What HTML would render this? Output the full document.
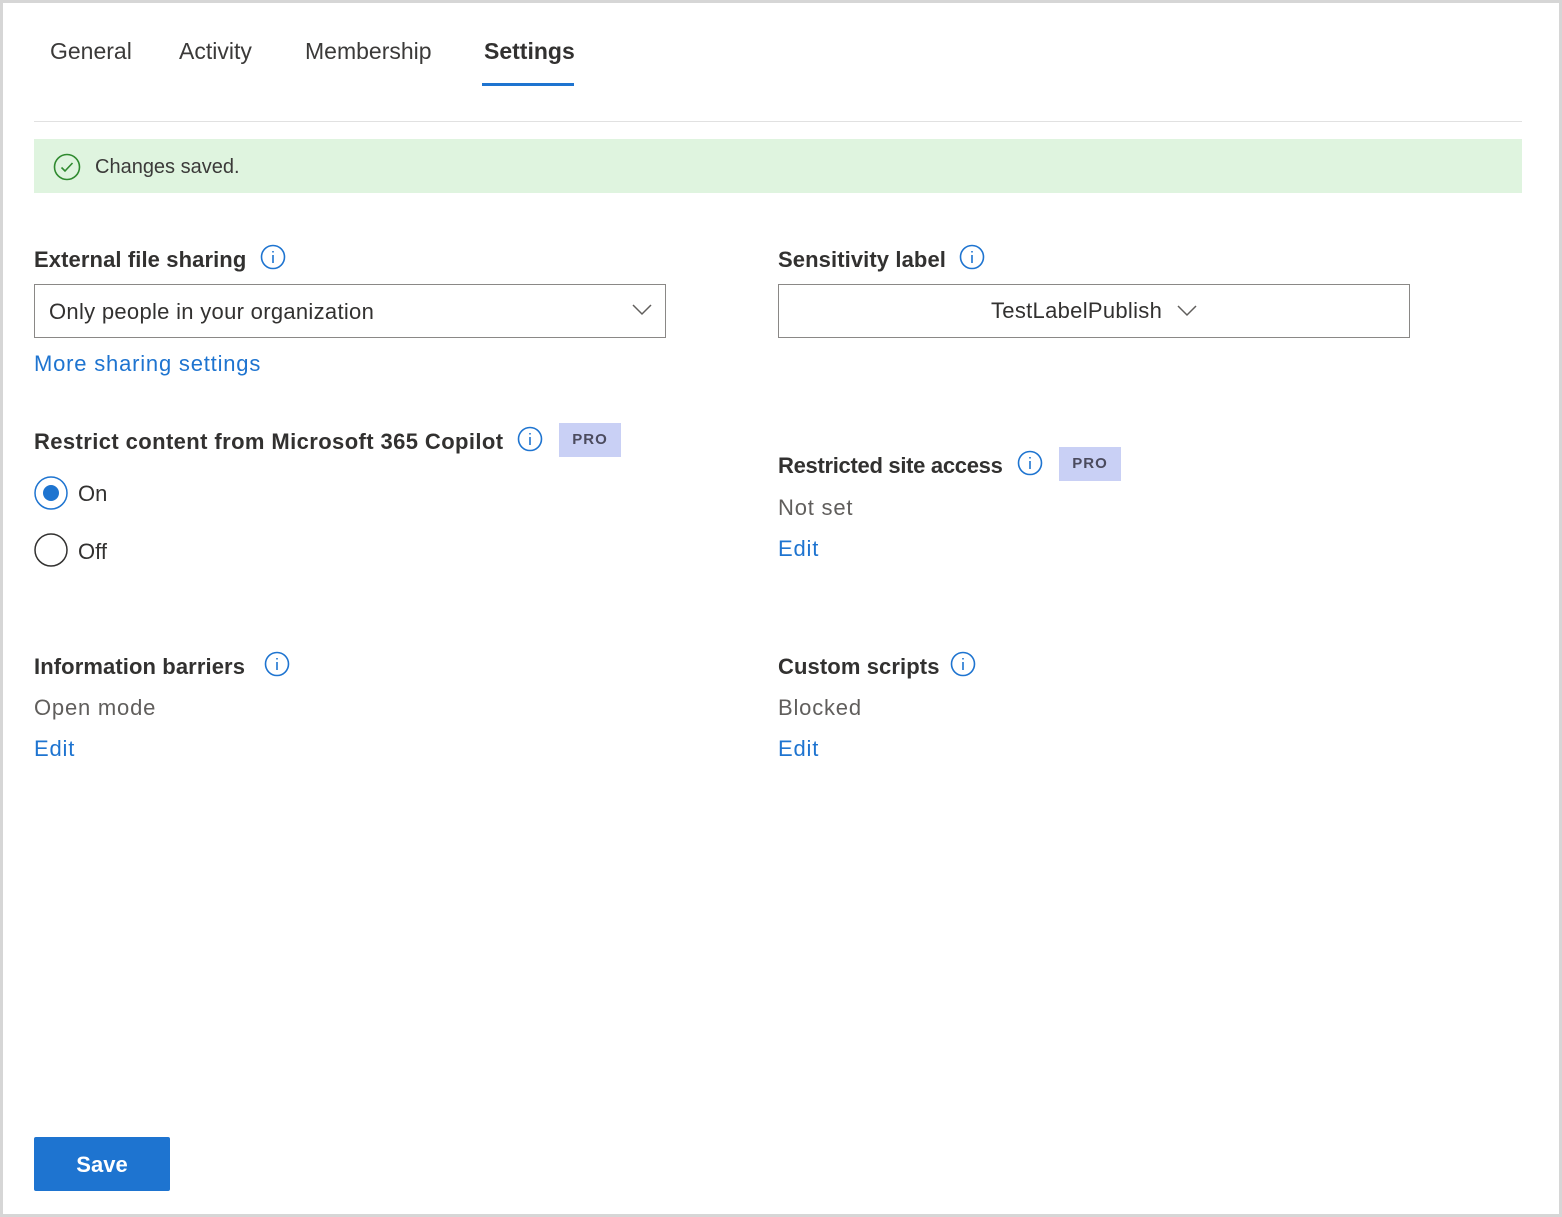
<!DOCTYPE html>
<html><head><meta charset="utf-8"><style>
*{margin:0;padding:0;box-sizing:border-box}
body{width:1562px;height:1217px;background:#fff;font-family:"Liberation Sans",sans-serif;color:#323130;position:relative;overflow:hidden}
.frame{position:absolute;left:0;top:0;width:1562px;height:1217px;border:3px solid #d6d6d6}
.a{position:absolute;white-space:nowrap}
.tab{font-size:23px;color:#3b3a39;top:38px}
.h{font-size:22px;font-weight:bold;color:#323130;letter-spacing:0.1px}
.t{font-size:22px;color:#605e5c;letter-spacing:0.8px}
.l{font-size:22px;color:#1e74d0;letter-spacing:0.8px}
.pro{position:absolute;background:#c9d0f5;color:#4b4b5e;font-size:15px;font-weight:bold;letter-spacing:1px;width:62px;height:34px;line-height:34px;text-align:center}
.box{position:absolute;border:1px solid #8a8886;height:54px;width:632px}
</style></head><body>
<div class="frame"></div>
<div class="a tab" style="left:50px">General</div>
<div class="a tab" style="left:179px">Activity</div>
<div class="a tab" style="left:305px">Membership</div>
<div class="a tab" style="left:484px;font-weight:bold;color:#323130">Settings</div>
<div class="a" style="left:482px;top:83px;width:92px;height:3px;background:#1e74d0"></div>
<div class="a" style="left:34px;top:121px;width:1488px;height:1px;background:#e1e1e1"></div>
<div class="a" style="left:34px;top:139px;width:1488px;height:54px;background:#dff4df"></div>
<svg class="a" style="left:53px;top:153px" width="28" height="28" viewBox="0 0 28 28"><circle cx="14" cy="14" r="12.5" fill="none" stroke="#2f8a2f" stroke-width="1.6"/><path d="M8.5 14.5l3.5 3.5 7.5-8" fill="none" stroke="#2f8a2f" stroke-width="1.6"/></svg>
<div class="a" style="left:95px;top:156px;font-size:20px;color:#3b3a39">Changes saved.</div>

<div class="a h" style="left:34px;top:247px">External file sharing</div>
<svg class="a" style="left:260px;top:244px" width="26" height="26" viewBox="0 0 26 26"><circle cx="13" cy="13" r="11.5" fill="none" stroke="#1e74d0" stroke-width="1.6"/><path d="M13 11v8M13 7v1.5" stroke="#1e74d0" stroke-width="1.6"/></svg>
<div class="box" style="left:34px;top:284px"></div>
<div class="a" style="left:49px;top:299px;font-size:22px;color:#323130;letter-spacing:0.3px">Only people in your organization</div>
<svg class="a" style="left:632px;top:302px" width="20" height="14"><path d="M1 3l9 9 9-9" fill="none" stroke="#605e5c" stroke-width="1.5"/></svg>
<div class="a l" style="left:34px;top:351px">More sharing settings</div>

<div class="a h" style="left:778px;top:247px">Sensitivity label</div>
<svg class="a" style="left:959px;top:244px" width="26" height="26" viewBox="0 0 26 26"><circle cx="13" cy="13" r="11.5" fill="none" stroke="#1e74d0" stroke-width="1.6"/><path d="M13 11v8M13 7v1.5" stroke="#1e74d0" stroke-width="1.6"/></svg>
<div class="box" style="left:778px;top:284px"></div>
<div class="a" style="left:991px;top:298px;font-size:22px;color:#323130;letter-spacing:0.3px">TestLabelPublish</div>
<svg class="a" style="left:1177px;top:303px" width="20" height="14"><path d="M1 3l9 9 9-9" fill="none" stroke="#605e5c" stroke-width="1.5"/></svg>

<div class="a h" style="left:34px;top:429px;letter-spacing:0.4px">Restrict content from Microsoft 365 Copilot</div>
<svg class="a" style="left:517px;top:426px" width="26" height="26" viewBox="0 0 26 26"><circle cx="13" cy="13" r="11.5" fill="none" stroke="#1e74d0" stroke-width="1.6"/><path d="M13 11v8M13 7v1.5" stroke="#1e74d0" stroke-width="1.6"/></svg>
<div class="pro" style="left:559px;top:423px">PRO</div>
<svg class="a" style="left:33px;top:476px" width="36" height="36"><circle cx="18" cy="17" r="16" fill="none" stroke="#1e74d0" stroke-width="1.5"/><circle cx="18" cy="17" r="8" fill="#1e74d0"/></svg>
<div class="a" style="left:78px;top:481px;font-size:22px;color:#323130">On</div>
<svg class="a" style="left:33px;top:533px" width="36" height="36"><circle cx="18" cy="17" r="16" fill="none" stroke="#323130" stroke-width="1.5"/></svg>
<div class="a" style="left:78px;top:539px;font-size:22px;color:#323130">Off</div>

<div class="a h" style="left:778px;top:453px;letter-spacing:-0.3px">Restricted site access</div>
<svg class="a" style="left:1017px;top:450px" width="26" height="26" viewBox="0 0 26 26"><circle cx="13" cy="13" r="11.5" fill="none" stroke="#1e74d0" stroke-width="1.6"/><path d="M13 11v8M13 7v1.5" stroke="#1e74d0" stroke-width="1.6"/></svg>
<div class="pro" style="left:1059px;top:447px">PRO</div>
<div class="a t" style="left:778px;top:495px">Not set</div>
<div class="a l" style="left:778px;top:536px">Edit</div>

<div class="a h" style="left:34px;top:654px">Information barriers</div>
<svg class="a" style="left:264px;top:651px" width="26" height="26" viewBox="0 0 26 26"><circle cx="13" cy="13" r="11.5" fill="none" stroke="#1e74d0" stroke-width="1.6"/><path d="M13 11v8M13 7v1.5" stroke="#1e74d0" stroke-width="1.6"/></svg>
<div class="a t" style="left:34px;top:695px">Open mode</div>
<div class="a l" style="left:34px;top:736px">Edit</div>

<div class="a h" style="left:778px;top:654px">Custom scripts</div>
<svg class="a" style="left:950px;top:651px" width="26" height="26" viewBox="0 0 26 26"><circle cx="13" cy="13" r="11.5" fill="none" stroke="#1e74d0" stroke-width="1.6"/><path d="M13 11v8M13 7v1.5" stroke="#1e74d0" stroke-width="1.6"/></svg>
<div class="a t" style="left:778px;top:695px">Blocked</div>
<div class="a l" style="left:778px;top:736px">Edit</div>

<div class="a" style="left:34px;top:1137px;width:136px;height:54px;background:#1e74d0;border-radius:2px;color:#fff;font-size:22px;font-weight:bold;text-align:center;line-height:56px">Save</div>
</body></html>
